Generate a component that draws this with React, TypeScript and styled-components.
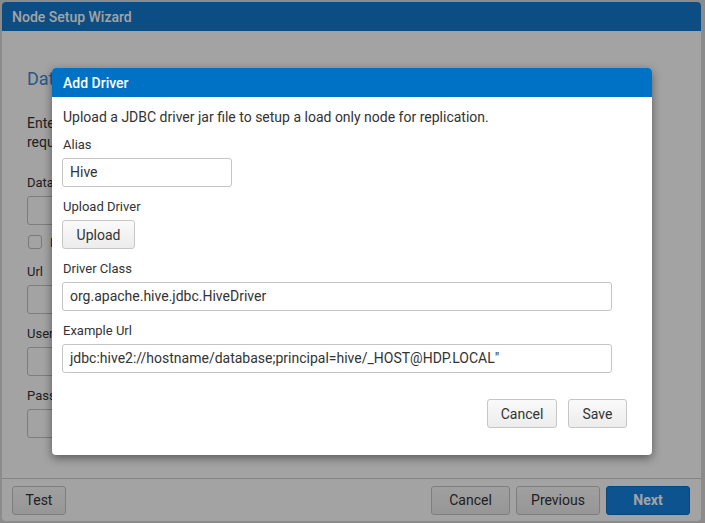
import React from "react";
import styled, { createGlobalStyle } from "styled-components";

const Global = createGlobalStyle`
  html, body { margin: 0; padding: 0; }
  body {
    background: #dadada;
    font-family: Roboto, "Liberation Sans", Arial, sans-serif;
    color: #333;
    width: 705px;
    height: 523px;
    overflow: hidden;
  }
  * { box-sizing: border-box; }
`;

const Page = styled.div`
  position: relative;
  width: 705px;
  height: 523px;
  padding: 2px 4px 2px 2px;
`;

const Wizard = styled.div`
  width: 699px;
  height: 519px;
  background: #fff;
  border-radius: 4px;
  display: flex;
  flex-direction: column;
  overflow: hidden;
`;

const WizardHeader = styled.div`
  height: 29px;
  background: #1379cd;
  color: #fff;
  font-size: 14px;
  font-weight: 500;
  display: flex;
  align-items: center;
  padding-left: 10px;
`;

const WizardBody = styled.div`
  flex: 1;
  padding: 36px 25px 0;
  display: flex;
  flex-direction: column;
`;

const Heading = styled.h2`
  margin: 0;
  font-size: 18px;
  line-height: 24px;
  font-weight: 400;
  color: #3f8bd2;
`;

const Intro = styled.p`
  margin: 23px 0 21px;
  font-size: 14px;
  line-height: 19px;
`;

const Label = styled.div`
  font-size: 13px;
  line-height: 20px;
  margin-bottom: 3px;
`;

const Field = styled.div`
  display: flex;
  flex-direction: column;
  margin-bottom: 10px;
`;

const TextBox = styled.div<{ $w: number }>`
  width: ${(p) => p.$w}px;
  height: 29px;
  border: 1px solid #c4c4c4;
  border-radius: 3px;
  background: #fff;
  font-size: 14px;
  line-height: 27px;
  padding: 0 7px;
  color: #333;
  white-space: nowrap;
  overflow: hidden;
`;

const CheckRow = styled.div`
  display: flex;
  align-items: center;
  gap: 8px;
  height: 14px;
  margin: 0 0 13px;
  font-size: 13px;
`;

const Check = styled.span`
  width: 14px;
  height: 14px;
  margin-left: 1px;
  border: 1px solid #bdbdbd;
  border-radius: 3px;
  background: #fff;
`;

const WizardFooter = styled.div`
  height: 43px;
  border-top: 1px solid #cfcfcf;
  display: flex;
  align-items: center;
  padding: 0 11px 0 10px;
  gap: 6px;
`;

const Spacer = styled.div`
  flex: 1;
`;

const Button = styled.button<{ $w: number; $primary?: boolean }>`
  width: ${(p) => p.$w}px;
  height: 29px;
  border-radius: 3px;
  font-family: inherit;
  font-size: 14px;
  padding: 0;
  cursor: pointer;
  border: 1px solid ${(p) => (p.$primary ? "#0f6fc1" : "#c6c6c6")};
  background: ${(p) =>
    p.$primary ? "#1383e2" : "linear-gradient(#fafafa, #ececec)"};
  color: ${(p) => (p.$primary ? "#fff" : "#333")};
  font-weight: ${(p) => (p.$primary ? 700 : 400)};
`;

const Dim = styled.div`
  position: absolute;
  inset: 0;
  background: rgba(0, 0, 0, 0.36);
`;

const Modal = styled.div`
  position: absolute;
  left: 52px;
  top: 68px;
  width: 600px;
  background: #fff;
  border-radius: 4px;
  box-shadow: 0 3px 10px rgba(0, 0, 0, 0.45);
  overflow: hidden;
`;

const ModalHeader = styled.div`
  height: 29px;
  background: #0072c6;
  color: #fff;
  font-size: 14px;
  font-weight: 500;
  display: flex;
  align-items: center;
  padding-left: 11px;
`;

const ModalBody = styled.div`
  padding: 10px 10px 0;
`;

const ModalText = styled.div`
  font-size: 14px;
  line-height: 20px;
  padding-left: 1px;
  margin-bottom: 8px;
`;

const ModalLabel = styled(Label)`
  padding-left: 1px;
`;

const ModalFooter = styled.div`
  display: flex;
  justify-content: flex-end;
  gap: 11px;
  padding: 16px 25px 27px;
`;

export default function App() {
  return (
    <>
      <Global />
      <Page>
        <Wizard>
          <WizardHeader>Node Setup Wizard</WizardHeader>
          <WizardBody>
            <Heading>Database Connection</Heading>
            <Intro>
              Enter the connection details for the database you would like to use. All fields are
              <br />
              required.
            </Intro>
            <Field>
              <Label>Database Type</Label>
              <TextBox $w={300} />
            </Field>
            <CheckRow>
              <Check />
              Load only
            </CheckRow>
            <Field>
              <Label>Url</Label>
              <TextBox $w={300} />
            </Field>
            <Field>
              <Label>User</Label>
              <TextBox $w={300} />
            </Field>
            <Field>
              <Label>Password</Label>
              <TextBox $w={300} />
            </Field>
          </WizardBody>
          <WizardFooter>
            <Button $w={54}>Test</Button>
            <Spacer />
            <Button $w={79}>Cancel</Button>
            <Button $w={84}>Previous</Button>
            <Button $w={84} $primary>
              Next
            </Button>
          </WizardFooter>
        </Wizard>
        <Dim />
        <Modal>
          <ModalHeader>Add Driver</ModalHeader>
          <ModalBody>
            <ModalText>Upload a JDBC driver jar file to setup a load only node for replication.</ModalText>
            <Field>
              <ModalLabel>Alias</ModalLabel>
              <TextBox $w={170}>Hive</TextBox>
            </Field>
            <Field>
              <ModalLabel>Upload Driver</ModalLabel>
              <Button $w={73}>Upload</Button>
            </Field>
            <Field>
              <ModalLabel>Driver Class</ModalLabel>
              <TextBox $w={550}>org.apache.hive.jdbc.HiveDriver</TextBox>
            </Field>
            <Field>
              <ModalLabel>Example Url</ModalLabel>
              <TextBox $w={550}>jdbc:hive2://hostname/database;principal=hive/_HOST@HDP.LOCAL"</TextBox>
            </Field>
          </ModalBody>
          <ModalFooter>
            <Button $w={70}>Cancel</Button>
            <Button $w={59}>Save</Button>
          </ModalFooter>
        </Modal>
      </Page>
    </>
  );
}
